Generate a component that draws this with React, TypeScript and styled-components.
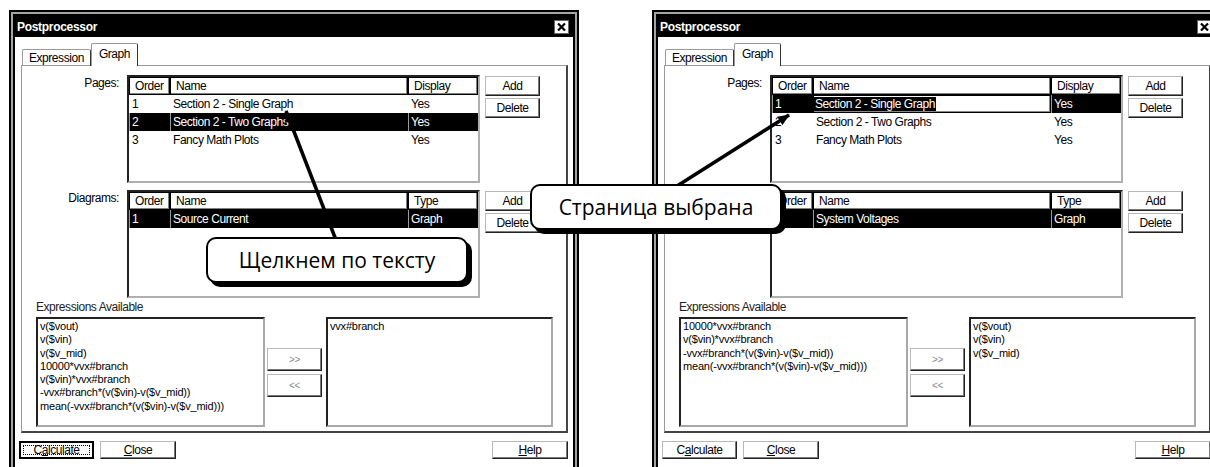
import styled, { createGlobalStyle } from 'styled-components';

const GlobalStyle = createGlobalStyle`
  html, body {
    margin: 0;
    padding: 0;
    background: #fff;
  }
`;

const UI_FONT = `"Liberation Sans", Arial, sans-serif`;

const Stage = styled.div`
  position: relative;
  width: 1210px;
  height: 467px;
  overflow: hidden;
  box-sizing: border-box;
  display: flex;
  gap: 73px;
  padding: 10px 0 0 9px;
  background: #fff;
`;

const Window = styled.div`
  flex: 0 0 570px;
  height: 472px;
  box-sizing: border-box;
  display: flex;
  flex-direction: column;
  border: 2px solid #000;
  padding: 4px;
  box-shadow: inset 0 0 0 2px #a4a4a4, inset 0 0 0 4px #000;
  background: #fff;
  font-family: ${UI_FONT};
  font-size: 12px;
  letter-spacing: -0.45px;
  color: #000;
`;

const TitleBar = styled.div`
  height: 21px;
  flex: 0 0 21px;
  display: flex;
  align-items: center;
  justify-content: space-between;
  padding: 0 4px 0 2px;
  background: #000;
  color: #fff;
  font-weight: bold;
  font-size: 12px;
  letter-spacing: -0.3px;
`;

const CloseBox = styled.div`
  width: 15px;
  height: 14px;
  box-sizing: border-box;
  display: flex;
  align-items: center;
  justify-content: center;
  background: #fff;
  border: 1px solid #666;
`;

const Body = styled.div`
  display: flex;
  flex-direction: column;
  padding: 7px 5px 0 6px;
`;

const TabStrip = styled.div`
  display: flex;
  align-items: flex-end;
  height: 22px;
  padding-left: 1px;
  margin-bottom: -1px;
  position: relative;
  z-index: 1;
`;

const Tab = styled.div<{ $active?: boolean }>`
  height: ${(p) => (p.$active ? 23 : 17)}px;
  box-sizing: border-box;
  padding: ${(p) => (p.$active ? '2px 7px 0' : '0 6px')};
  border: 1px solid #9a9a9a;
  border-right-color: #333;
  border-bottom: none;
  border-radius: 2px 2px 0 0;
  background: ${(p) => (p.$active ? '#fff' : 'transparent')};
  line-height: 16px;
`;

const Panel = styled.div`
  height: 368px;
  box-sizing: border-box;
  border: 1px solid #9a9a9a;
  border-right: 2px solid #444;
  border-bottom: 2px solid #444;
  padding-top: 9px;
`;

const FieldRow = styled.div`
  display: flex;
  align-items: flex-start;
  & + & {
    margin-top: 7px;
  }
`;

const FieldLabel = styled.div`
  width: 97px;
  margin-right: 8px;
  padding-top: 1px;
  text-align: right;
`;

const ListBox = styled.div`
  width: 353px;
  height: 108px;
  box-sizing: border-box;
  border: 2px solid;
  border-color: #222 #b0b0b0 #b0b0b0 #222;
  background: #fff;
  overflow: hidden;
`;

const GridRow = styled.div`
  display: grid;
  grid-template-columns: 41px 238px 70px;
  height: 18px;
`;

const HeadCell = styled.div`
  box-sizing: border-box;
  border: 1px solid #000;
  box-shadow: inset -1px -1px 0 #808080;
  padding-left: 5px;
  line-height: 16px;
  white-space: nowrap;
  overflow: hidden;
`;

const Cell = styled.div<{ $sel?: boolean }>`
  box-sizing: border-box;
  padding-left: 3px;
  line-height: 18px;
  white-space: nowrap;
  overflow: hidden;
  background: ${(p) => (p.$sel ? '#000' : 'transparent')};
  color: ${(p) => (p.$sel ? '#fff' : '#000')};
  box-shadow: ${(p) => (p.$sel ? 'inset 1px 0 0 #9a9a9a' : 'none')};
`;

const EditCell = styled.div`
  box-sizing: border-box;
  height: 18px;
  border: 1px solid #000;
  box-shadow: inset -1px -1px 0 #888;
  line-height: 16px;
  white-space: nowrap;
  overflow: hidden;
`;

const Selected = styled.span`
  background: #000;
  color: #fff;
  padding: 0 1px;
`;

const ButtonColumn = styled.div`
  display: flex;
  flex-direction: column;
  gap: 2px;
  margin-left: 5px;
  padding-top: 1px;
`;

const Button = styled.div<{ $w?: number; $h?: number; $disabled?: boolean }>`
  position: relative;
  width: ${(p) => p.$w ?? 55}px;
  height: ${(p) => p.$h ?? 20}px;
  box-sizing: border-box;
  display: flex;
  align-items: center;
  justify-content: center;
  background: #fff;
  border: 1px solid;
  border-color: #b8b8b8 #222 #222 #b8b8b8;
  box-shadow: inset -1px -1px 0 #7a7a7a;
  color: ${(p) => (p.$disabled ? '#8a8a8a' : '#000')};
  font-size: ${(p) => (p.$disabled ? '10px' : '12px')};
`;

const DefaultButton = styled(Button)`
  border: 2px solid #000;
  box-shadow: none;
  &::after {
    content: '';
    position: absolute;
    inset: 2px;
    border: 1px dotted #000;
  }
`;

const ExprSection = styled.div`
  margin-top: 2px;
  padding-left: 14px;
`;

const ExprLabel = styled.div`
  line-height: 14px;
  color: #222;
`;

const ExprRow = styled.div`
  display: flex;
  align-items: flex-start;
  margin-top: 3px;
`;

const ExprList = styled.div<{ $w: number }>`
  width: ${(p) => p.$w}px;
  height: 110px;
  box-sizing: border-box;
  border: 2px solid;
  border-color: #222 #a8a8a8 #a8a8a8 #222;
  padding: 1px 2px;
  font-size: 11px;
  line-height: 13.3px;
  letter-spacing: -0.2px;
  white-space: nowrap;
  overflow: hidden;
`;

const MoveButtons = styled.div`
  display: flex;
  flex-direction: column;
  gap: 3px;
  margin: 31px 4px 0 2px;
`;

const Footer = styled.div`
  display: flex;
  align-items: center;
  margin: 8px 0 0 -2px;
`;

const Spacer = styled.div`
  flex: 1;
`;

const Overlay = styled.svg`
  position: absolute;
  left: 0;
  top: 0;
  pointer-events: none;
`;

const Callout = styled.div<{ $left: number; $top: number; $w: number }>`
  position: absolute;
  left: ${(p) => p.$left}px;
  top: ${(p) => p.$top}px;
  width: ${(p) => p.$w}px;
  height: 46px;
  box-sizing: border-box;
  display: flex;
  align-items: center;
  justify-content: center;
  background: #fff;
  border: 2px solid #000;
  border-radius: 10px;
  box-shadow: 4px 4px 0 #000;
  font-family: "Open Sans", "Noto Sans", sans-serif;
  font-size: 21px;
  letter-spacing: 0;
  color: #000;
`;

type Page = { order: string; name: string; display: string };

const PAGES: Page[] = [
  { order: '1', name: 'Section 2 - Single Graph', display: 'Yes' },
  { order: '2', name: 'Section 2 - Two Graphs', display: 'Yes' },
  { order: '3', name: 'Fancy Math Plots', display: 'Yes' },
];

type DialogProps = {
  selectedPage: number;
  editing?: boolean;
  diagram: string;
  available: string[];
  chosen: string[];
  focused?: boolean;
};

function Dialog({ selectedPage, editing, diagram, available, chosen, focused }: DialogProps) {
  const Calc = focused ? DefaultButton : Button;
  return (
    <Window>
      <TitleBar>
        <span>Postprocessor</span>
        <CloseBox>
          <svg width="9" height="8" viewBox="0 0 9 8">
            <path d="M1 0.5 L8 7.5 M8 0.5 L1 7.5" stroke="#000" strokeWidth="2.2" />
          </svg>
        </CloseBox>
      </TitleBar>
      <Body>
        <TabStrip>
          <Tab>Expression</Tab>
          <Tab $active>Graph</Tab>
        </TabStrip>
        <Panel>
          <FieldRow>
            <FieldLabel>Pages:</FieldLabel>
            <ListBox>
              <GridRow>
                <HeadCell>Order</HeadCell>
                <HeadCell>Name</HeadCell>
                <HeadCell>Display</HeadCell>
              </GridRow>
              {PAGES.map((p, i) => {
                const sel = i === selectedPage;
                return (
                  <GridRow key={p.order}>
                    <Cell $sel={sel}>{p.order}</Cell>
                    {sel && editing ? (
                      <EditCell>
                        <Selected>{p.name}</Selected>
                      </EditCell>
                    ) : (
                      <Cell $sel={sel}>{p.name}</Cell>
                    )}
                    <Cell $sel={sel}>{p.display}</Cell>
                  </GridRow>
                );
              })}
            </ListBox>
            <ButtonColumn>
              <Button>Add</Button>
              <Button>Delete</Button>
            </ButtonColumn>
          </FieldRow>
          <FieldRow>
            <FieldLabel>Diagrams:</FieldLabel>
            <ListBox>
              <GridRow>
                <HeadCell>Order</HeadCell>
                <HeadCell>Name</HeadCell>
                <HeadCell>Type</HeadCell>
              </GridRow>
              <GridRow>
                <Cell $sel>1</Cell>
                <Cell $sel>{diagram}</Cell>
                <Cell $sel>Graph</Cell>
              </GridRow>
            </ListBox>
            <ButtonColumn>
              <Button>Add</Button>
              <Button>Delete</Button>
            </ButtonColumn>
          </FieldRow>
          <ExprSection>
            <ExprLabel>Expressions Available</ExprLabel>
            <ExprRow>
              <ExprList $w={229}>
                {available.map((e) => (
                  <div key={e}>{e}</div>
                ))}
              </ExprList>
              <MoveButtons>
                <Button $h={23} $disabled>&gt;&gt;</Button>
                <Button $h={23} $disabled>&lt;&lt;</Button>
              </MoveButtons>
              <ExprList $w={227}>
                {chosen.map((e) => (
                  <div key={e}>{e}</div>
                ))}
              </ExprList>
            </ExprRow>
          </ExprSection>
        </Panel>
        <Footer>
          <Calc $w={75} $h={18}>
            C<u>a</u>lculate
          </Calc>
          <Button $w={76} $h={18} style={{ marginLeft: 6 }}>
            <u>C</u>lose
          </Button>
          <Spacer />
          <Button $w={76} $h={18}>
            <u>H</u>elp
          </Button>
        </Footer>
      </Body>
    </Window>
  );
}

const ALL_EXPR = [
  'v($vout)',
  'v($vin)',
  'v($v_mid)',
  '10000*vvx#branch',
  'v($vin)*vvx#branch',
  '-vvx#branch*(v($vin)-v($v_mid))',
  'mean(-vvx#branch*(v($vin)-v($v_mid)))',
];

export default function App() {
  return (
    <>
      <GlobalStyle />
      <Stage>
        <Dialog
          selectedPage={1}
          diagram="Source Current"
          available={ALL_EXPR}
          chosen={['vvx#branch']}
          focused
        />
        <Dialog
          selectedPage={0}
          editing
          diagram="System Voltages"
          available={ALL_EXPR.slice(3)}
          chosen={ALL_EXPR.slice(0, 3)}
        />
        <Overlay width="1210" height="467" viewBox="0 0 1210 467">
          <defs>
            <marker
              id="head"
              markerUnits="userSpaceOnUse"
              markerWidth="12"
              markerHeight="10"
              refX="11"
              refY="5"
              orient="auto"
            >
              <path d="M0 0 L12 5 L0 10 Z" fill="#000" />
            </marker>
          </defs>
          <line x1="336" y1="240" x2="286" y2="111" stroke="#000" strokeWidth="3.5" markerEnd="url(#head)" />
          <line x1="677" y1="186" x2="789" y2="115" stroke="#000" strokeWidth="3.5" markerEnd="url(#head)" />
        </Overlay>
        <Callout $left={206} $top={237} $w={262}>
          Щелкнем по тексту
        </Callout>
        <Callout $left={530} $top={184} $w={252}>
          Страница выбрана
        </Callout>
      </Stage>
    </>
  );
}
